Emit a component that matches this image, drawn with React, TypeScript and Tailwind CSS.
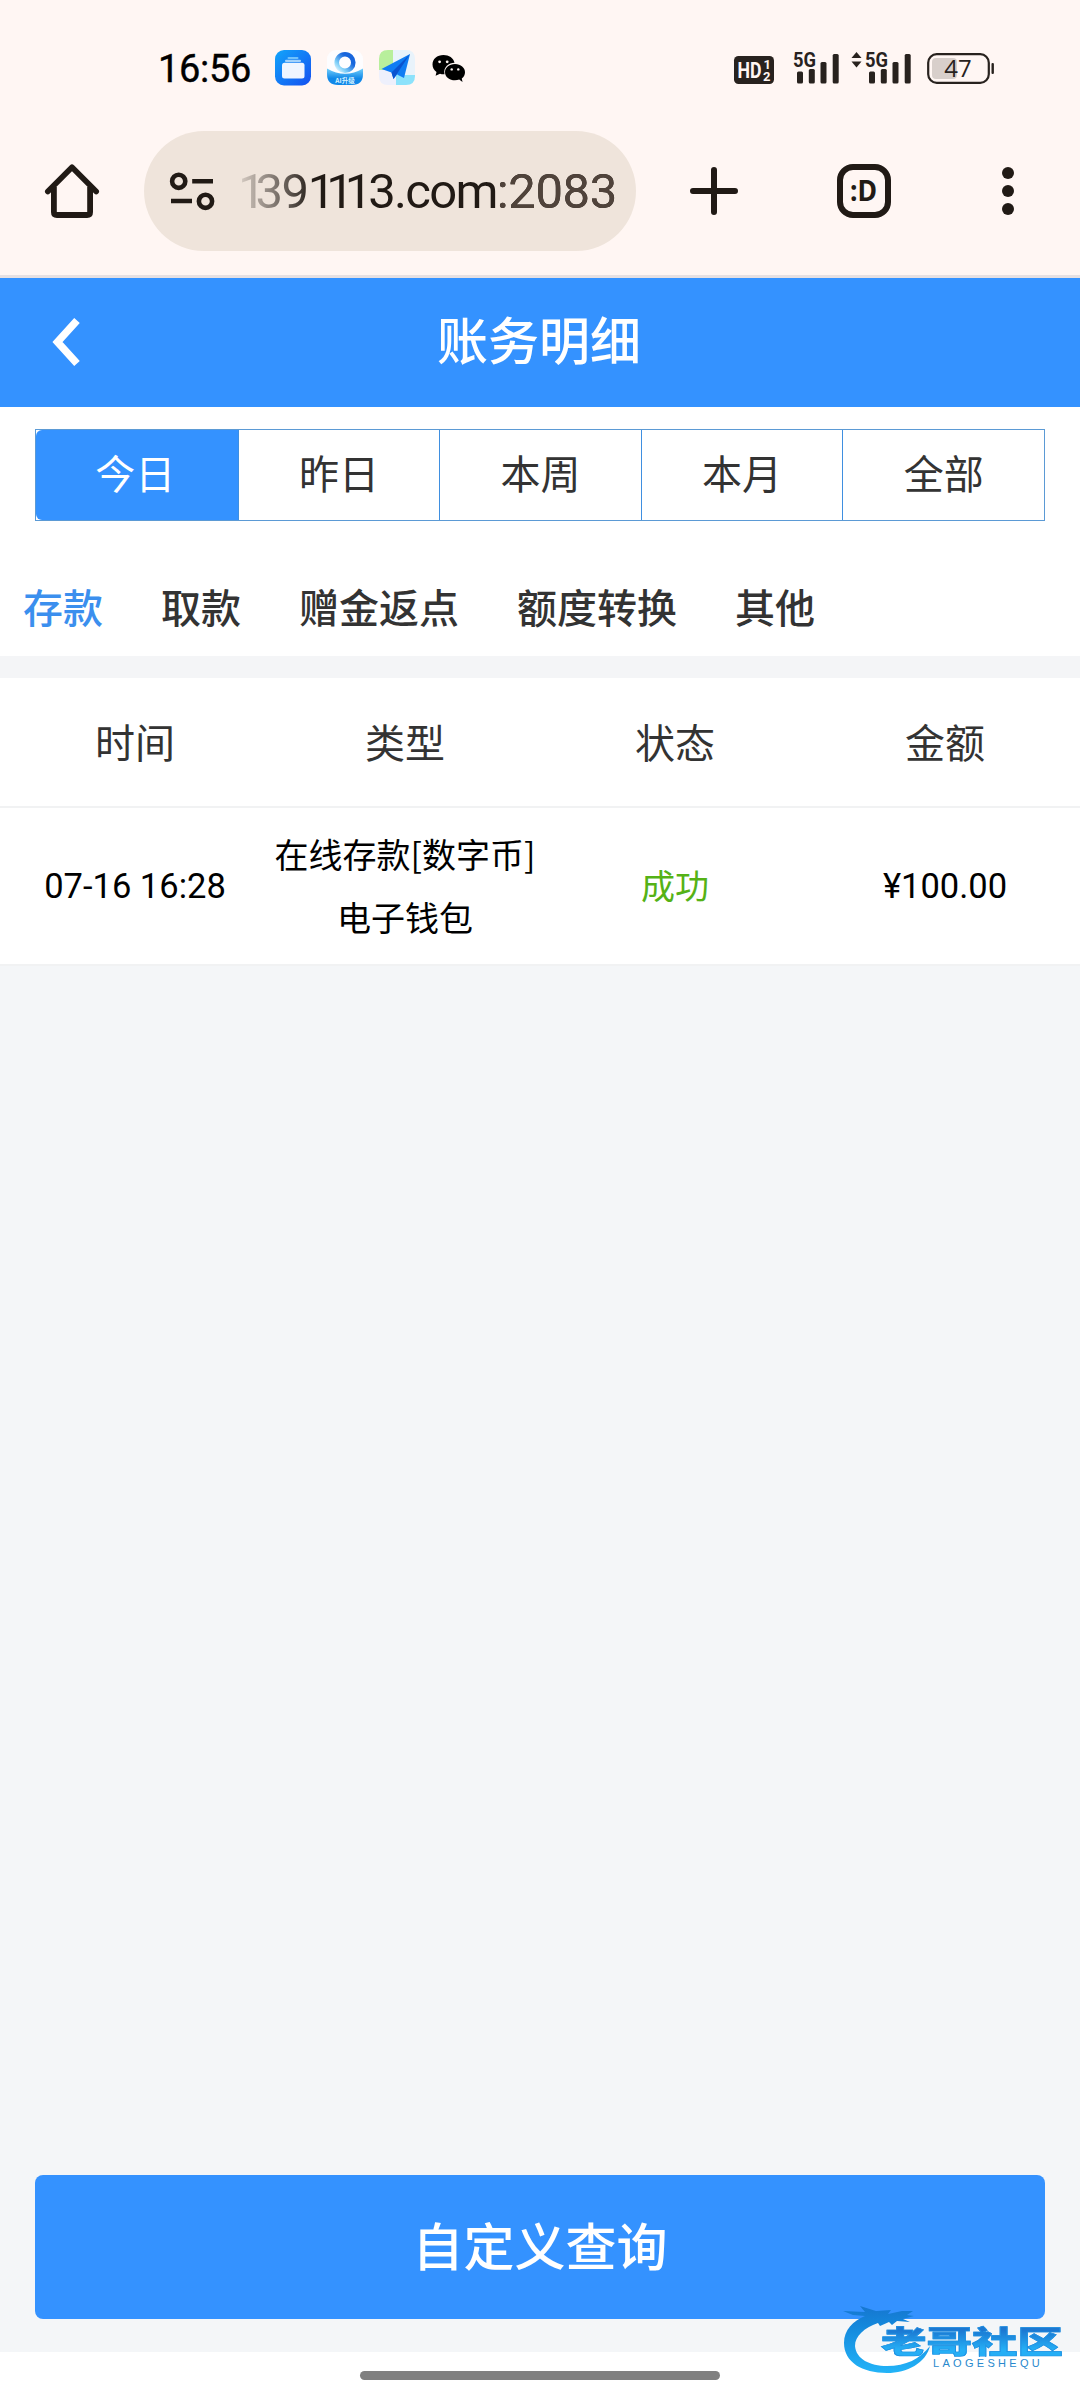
import type { ReactNode } from 'react';

const DATE_TABS = ['今日', '昨日', '本周', '本月', '全部'];
const CATEGORIES = ['存款', '取款', '赠金返点', '额度转换', '其他'];
const COLUMNS = ['时间', '类型', '状态', '金额'];

function FilesIcon() {
  return (
    <svg className="ml-[24px]" width="36" height="36" viewBox="0 0 36 36">
      <defs>
        <linearGradient id="files" x1="0" y1="0" x2="1" y2="1">
          <stop offset="0" stopColor="#12a5fb" />
          <stop offset="1" stopColor="#1450f0" />
        </linearGradient>
      </defs>
      <rect width="36" height="35.5" rx="9" fill="url(#files)" />
      <rect x="12.5" y="7" width="11" height="2" rx="1" fill="#6fc1fb" />
      <rect x="10" y="9.7" width="16" height="2.3" rx="1" fill="#a3d2fb" />
      <rect x="7" y="12.8" width="22.5" height="15.7" rx="2.5" fill="#eff5ff" />
    </svg>
  );
}

function AssistantIcon() {
  return (
    <svg className="ml-[16px]" width="36" height="36" viewBox="0 0 36 36">
      <defs>
        <linearGradient id="ring" x1="1" y1="0" x2="0" y2="1">
          <stop offset="0.3" stopColor="#1766dd" />
          <stop offset="0.75" stopColor="#7fd0f8" />
          <stop offset="1" stopColor="#e3f5fe" />
        </linearGradient>
        <linearGradient id="tray" x1="0" y1="0" x2="0" y2="1">
          <stop offset="0" stopColor="#74d0fb" />
          <stop offset="0.6" stopColor="#1188e8" />
        </linearGradient>
      </defs>
      <rect width="36" height="35" rx="9" fill="#fdfdff" />
      <circle cx="18" cy="12.500" r="8.300" fill="none" stroke="url(#ring)" strokeWidth="4.600" />
      <path d="M0 18.500Q18 29 36 18.500V24Q36 35 25 35H11Q0 35 0 24Z" fill="url(#tray)" />
      <text x="18" y="33.200" textAnchor="middle" fontSize="6.500" fontWeight="700" fill="#d9f3ff" fontFamily="Noto Sans CJK SC">AI升级</text>
    </svg>
  );
}

function PlaneIcon() {
  return (
    <svg className="ml-[16px]" width="36" height="36" viewBox="0 0 36 36">
      <path d="M9 0H14V20H0V9Q0 0 9 0Z" fill="#b8ef9c" />
      <path d="M14 0H27Q36 0 36 9V25H14Z" fill="#e9f3fb" />
      <path d="M0 20H17V35H9Q0 35 0 26Z" fill="#eef0fc" />
      <path d="M17 25H36V26Q36 35 27 35H17Z" fill="#8ce2fb" />
      <path d="M2.500 19L31 4L25 28L18 24.500L14.500 29L12.500 22.500Z" fill="#0f7cf3" />
      <path d="M12.500 22.500L31 4L17.500 24.500L14.500 29Z" fill="#0a53cf" />
    </svg>
  );
}

function WeChatIcon() {
  return (
    <svg className="ml-[17px]" width="34" height="30" viewBox="0 0 34 30">
      <path d="M11.500 1C5 1 0.500 5 0.500 10.500C0.500 13.500 2 16 4.500 18L3.600 21.800L8 19.700C9.500 20.200 11 20.300 12.500 20.200C11 13 17 8.800 22.500 8.800C21.500 4 17 1 11.500 1Z" fill="#000" />
      <path d="M23 10C17 10 13 13.800 13 18.200C13 22.900 17.500 26.300 23 26.300C24.500 26.300 26 26 27.200 25.600L30.500 28L29.800 24.400C31.900 22.900 33 20.700 33 18.200C33 13.800 28.800 10 23 10Z" fill="#000" />
      <circle cx="7.600" cy="7.800" r="1.400" fill="#fff6f3" />
      <circle cx="15.200" cy="7.800" r="1.400" fill="#fff6f3" />
      <circle cx="19.700" cy="15.400" r="1.200" fill="#fff6f3" />
      <circle cx="26.300" cy="15.400" r="1.200" fill="#fff6f3" />
    </svg>
  );
}

function SignalIcon({ className }: { className: string }) {
  return (
    <svg className={`overflow-visible ${className}`} width="47" height="34" viewBox="0 0 47 34" fill="#28221e">
      <text x="0" y="17" fontSize="21" fontWeight="700" fontFamily="Roboto" textLength="23" lengthAdjust="spacingAndGlyphs">5G</text>
      <rect x="4" y="21.500" width="6" height="12" rx="1.500" />
      <rect x="15.800" y="19" width="6" height="14.500" rx="1.500" />
      <rect x="27.500" y="12" width="6" height="21.500" rx="1.500" />
      <rect x="39.700" y="4" width="6" height="29.500" rx="1.500" />
    </svg>
  );
}

function StatusBar() {
  return (
    <div className="flex h-[110px] items-start pt-[50px]">
      <div className="ml-[158px] w-[93px] whitespace-nowrap font-[Roboto] text-[38px] leading-[38px] tracking-[-0.3px] text-black [-webkit-text-stroke:0.4px_#000]">
        16:56
      </div>
      <FilesIcon />
      <AssistantIcon />
      <PlaneIcon />
      <div className="mt-[4px]"><WeChatIcon /></div>
      <svg className="ml-[268px] mt-[6px] overflow-visible" width="40" height="28" viewBox="0 0 40 28">
        <rect width="40" height="28" rx="4.500" fill="#28221e" />
        <text x="3.500" y="21.500" fontSize="21.500" fontWeight="700" fontFamily="Roboto" fill="#fff6f3" textLength="24" lengthAdjust="spacingAndGlyphs">HD</text>
        <text x="29.500" y="13" fontSize="13" fontWeight="700" fontFamily="Roboto" fill="#fff6f3">1</text>
        <text x="29" y="24.500" fontSize="13" fontWeight="700" fontFamily="Roboto" fill="#fff6f3">2</text>
      </svg>
      <SignalIcon className="ml-[19px]" />
      <svg className="ml-[11px] mt-[2px]" width="11" height="16" viewBox="0 0 11 16" fill="#28221e">
        <path d="M5.500 0L10.500 6H0.500Z" />
        <path d="M5.500 15.500L10.500 9.500H0.500Z" />
      </svg>
      <SignalIcon className="ml-[3px]" />
      <svg className="ml-[15px] mt-[3px] overflow-visible" width="68" height="32" viewBox="0 0 68 32">
        <rect x="5" y="5" width="25" height="21" rx="4" fill="#d8cfcb" />
        <rect x="1.200" y="1.200" width="60.600" height="28.600" rx="8.500" fill="none" stroke="#28221e" strokeWidth="2.200" />
        <rect x="64.500" y="10" width="2.400" height="11" rx="1" fill="#28221e" />
        <text x="31" y="24" textAnchor="middle" fontSize="24" fontFamily="Open Sans" fill="#28221e">47</text>
      </svg>
    </div>
  );
}

function BrowserBar() {
  return (
    <div className="flex h-[168px] items-start border-b-[3px] border-[#e6e0e2] pt-[21px]">
      <svg className="ml-[44px] mt-[32px]" width="56" height="56" viewBox="0 0 56 56" fill="none" stroke="#211a15">
        <path d="M3.800 28.500L28 4.200L52.200 28.500" strokeWidth="5.600" strokeLinecap="round" strokeLinejoin="round" />
        <path d="M9.900 24V49Q9.900 52 12.900 52H43.100Q46.100 52 46.100 49V24" strokeWidth="5.800" />
      </svg>
      <div className="ml-[44px] flex h-[120px] w-[492px] items-center rounded-full bg-[#efe4db]">
        <svg className="ml-[25px]" width="47" height="40" viewBox="0 0 47 40" fill="none" stroke="#211a15" strokeWidth="4.600">
          <circle cx="9.700" cy="10.300" r="6.600" />
          <path d="M23.200 10.300H44M2 30H23" />
          <circle cx="36.500" cy="30.300" r="6.600" />
        </svg>
        <div className="ml-[22px] mt-[2px] whitespace-nowrap bg-linear-to-r from-[#211a15]/10 via-[#211a15] via-20% to-[#211a15] bg-clip-text font-[Roboto] text-[49px] leading-[60px] text-transparent">
          <span className="tracking-[-10px]">1</span>
          <span className="tracking-[-1.500px]">39</span>
          <span className="tracking-[-9px]">111</span>
          <span className="ml-[5px] tracking-[-1.700px]">3.com</span>
          <span className="tracking-[-0.400px] text-[#50433b]">:2083</span>
        </div>
      </div>
      <svg className="ml-[53px] mt-[35px]" width="50" height="50" viewBox="0 0 50 50" stroke="#211a15" strokeWidth="6" strokeLinecap="round">
        <path d="M25 4V46M4 25H46" />
      </svg>
      <svg className="ml-[98px] mt-[33px]" width="54" height="54" viewBox="0 0 54 54">
        <rect x="3" y="3" width="48" height="48" rx="13" fill="none" stroke="#211a15" strokeWidth="6" />
        <text x="13" y="37" fontSize="29" fontWeight="700" fontFamily="Noto Sans" fill="#211a15" textLength="27" lengthAdjust="spacingAndGlyphs">:D</text>
      </svg>
      <svg className="ml-[110px] mt-[35px]" width="14" height="50" viewBox="0 0 14 50" fill="#211a15">
        <circle cx="7" cy="7" r="6" />
        <circle cx="7" cy="25" r="6" />
        <circle cx="7" cy="43" r="6" />
      </svg>
    </div>
  );
}

function Cell({ children, className = '' }: { children: ReactNode; className?: string }) {
  return <div className={`flex items-center justify-center text-center ${className}`}>{children}</div>;
}

function Watermark() {
  return (
    <div className="absolute left-[840px] top-[2300px] h-[80px] w-[232px]">
      <svg className="absolute left-0 top-0" width="110" height="80" viewBox="0 0 110 80">
        <defs>
          <linearGradient id="dragon" x1="0" y1="0" x2="0" y2="1">
            <stop offset="0" stopColor="#1676cf" />
            <stop offset="0.3" stopColor="#1488dc" />
            <stop offset="1" stopColor="#23b4f8" />
          </linearGradient>
        </defs>
        <path
          d="M3 11L25 12L20 6L36 11L51 10L48 14L62 11L73 11L67 15L74 16L63 19L70 22L57 21L52 25L49 22L40 26L38 23C24 28 15 36 15 46C16 59 30 66 47 66C66 66 80 59 90 46C86 63 67 73 47 73C22 73 4 62 4 43C4 30 13 21 25 16L13 15Z"
          fill="url(#dragon)"
        />
      </svg>
      <div className="absolute left-[41px] top-[14px] origin-center scale-y-[0.68] whitespace-nowrap bg-linear-to-b from-[#1c78d2] from-25% to-[#25aef5] to-80% bg-clip-text font-['Noto_Sans_CJK_SC'] text-[45.5px] font-black leading-[50px] text-transparent [-webkit-text-stroke:1px_#2091e2]">
        老哥社区
      </div>
      <div className="absolute left-[93px] top-[57px] whitespace-nowrap font-['Liberation_Sans'] text-[11px] leading-[12px] tracking-[3.300px] text-[#2989cd]">
        LAOGESHEQU
      </div>
    </div>
  );
}

export default function App() {
  return (
    <div className="relative flex h-[2400px] w-[1080px] flex-col overflow-hidden bg-white font-['Noto_Sans_CJK_SC',sans-serif]">
      <header className="bg-[#fff6f3]">
        <StatusBar />
        <BrowserBar />
      </header>

      <div className="flex h-[129px] items-center bg-[#3492ff] text-white">
        <svg className="mb-[2px] ml-[50px]" width="32" height="48" viewBox="0 0 32 48" fill="none" stroke="#fff" strokeWidth="7.500">
          <path d="M27 2.500L7.500 24L27 45.500" />
        </svg>
        <h1 className="mb-[10px] mr-[84px] flex-1 text-center text-[51px] font-medium leading-[60px]">账务明细</h1>
      </div>

      <div className="mx-[35px] mt-[22px] grid h-[92px] grid-cols-5 border border-[#5b9ad5]">
        {DATE_TABS.map((tab, i) => (
          <div
            key={tab}
            className={`flex items-center justify-center pb-[6px] text-[40px] leading-[60px] ${
              i === 0 ? 'rounded-l-[6px] bg-[#3492ff] pr-[3px] text-white' : 'border-l border-[#3f8fe0] text-[#333]'
            }`}
          >
            {tab}
          </div>
        ))}
      </div>

      <nav className="flex h-[135px] gap-[58px] pl-[23px] pt-[55px] text-[40px] font-medium leading-[60px]">
        {CATEGORIES.map((name, i) => (
          <span key={name} className={i === 0 ? 'text-[#3b8fee]' : 'text-[#333]'}>
            {name}
          </span>
        ))}
      </nav>

      <div className="h-[22px] bg-[#f4f5f7]" />

      <div className="grid h-[130px] grid-cols-4 border-b-2 border-[#f1f2f3] pb-[3px] text-[40px] leading-[60px] text-[#333]">
        {COLUMNS.map((name) => (
          <Cell key={name}>{name}</Cell>
        ))}
      </div>

      <div className="grid h-[158px] grid-cols-4 border-b-2 border-[#f1f2f3] pb-[2px] text-[34px] leading-[63px] text-black">
        <Cell className="pt-[2px] font-[Roboto] text-[34.5px]">07-16 16:28</Cell>
        <Cell>
          <div>
            <p className="whitespace-nowrap">在线存款[数字币]</p>
            <p>电子钱包</p>
          </div>
        </Cell>
        <Cell className="pb-[2px] text-[#55b216]">成功</Cell>
        <Cell className="pt-[2px] font-[Roboto] text-[34.5px]">¥100.00</Cell>
      </div>

      <main className="flex h-[1386px] flex-col justify-end bg-[#f4f6f8] px-[35px] pb-[33px]">
        <button className="h-[144px] rounded-[8px] bg-[#3492ff] pb-[6px] text-[51px] font-medium text-white">自定义查询</button>
      </main>

      <div className="flex h-[48px] items-center justify-center pb-[2px]">
        <div className="h-[9px] w-[360px] rounded-full bg-[#808080]" />
      </div>

      <Watermark />
    </div>
  );
}
